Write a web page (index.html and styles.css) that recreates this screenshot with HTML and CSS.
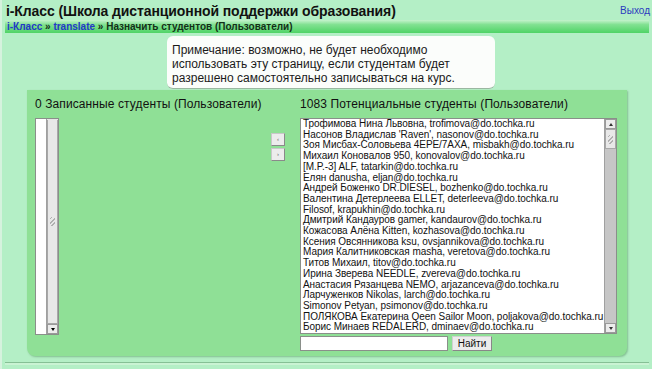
FILE: index.html
```html
<!DOCTYPE html>
<html lang="ru">
<head>
<meta charset="utf-8">
<title>i-Класс</title>
<link rel="stylesheet" href="styles.css">
</head>
<body>
<div class="header">
  <h1 class="title">i-Класс (Школа дистанционной поддержки образования)</h1>
  <a class="logout" href="#">Выход</a>
</div>
<div class="navbar">
  <a href="#">i-Класс</a> » <a href="#">translate</a> » Назначить студентов (Пользователи)
</div>
<div class="note">Примечание: возможно, не будет необходимо использовать эту страницу, если студентам будет разрешено самостоятельно записываться на курс.</div>
<div class="panel">
  <div class="col col-left">
    <div class="heading">0 Записанные студенты (Пользователи)</div>
    <div class="listbox listbox-small">
      <div class="list-body"></div>
      <div class="sbar sbar-empty">
        <div class="sbtn"></div>
        <div class="strack"><div class="thumb thumb-full"><span class="grip"></span></div></div>
        <div class="sbtn"><span class="arr-down dark"></span></div>
      </div>
    </div>
  </div>
  <div class="col col-mid">
    <button class="mv">‹</button>
    <button class="mv">›</button>
  </div>
  <div class="col col-right">
    <div class="heading">1083 Потенциальные студенты (Пользователи)</div>
    <div class="listbox listbox-big">
      <div class="list-body">
        <div class="opt">Трофимова Нина Львовна, trofimova@do.tochka.ru</div>
        <div class="opt">Насонов Владислав 'Raven', nasonov@do.tochka.ru</div>
        <div class="opt">Зоя Мисбах-Соловьева 4EPE/7AXA, misbakh@do.tochka.ru</div>
        <div class="opt">Михаил Коновалов 950, konovalov@do.tochka.ru</div>
        <div class="opt">[M.P.-3] ALF, tatarkin@do.tochka.ru</div>
        <div class="opt">Елян danusha, eljan@do.tochka.ru</div>
        <div class="opt">Андрей Боженко DR.DIESEL, bozhenko@do.tochka.ru</div>
        <div class="opt">Валентина Детерлеева ELLET, deterleeva@do.tochka.ru</div>
        <div class="opt">Filosof, krapukhin@do.tochka.ru</div>
        <div class="opt">Дмитрий Кандауров gamer, kandaurov@do.tochka.ru</div>
        <div class="opt">Кожасова Алёна Kitten, kozhasova@do.tochka.ru</div>
        <div class="opt">Ксения Овсянникова ksu, ovsjannikova@do.tochka.ru</div>
        <div class="opt">Мария Калитниковская masha, veretova@do.tochka.ru</div>
        <div class="opt">Титов Михаил, titov@do.tochka.ru</div>
        <div class="opt">Ирина Зверева NEEDLE, zvereva@do.tochka.ru</div>
        <div class="opt">Анастасия Рязанцева NEMO, arjazanceva@do.tochka.ru</div>
        <div class="opt">Ларчуженков Nikolas, larch@do.tochka.ru</div>
        <div class="opt">Simonov Petyan, psimonov@do.tochka.ru</div>
        <div class="opt">ПОЛЯКОВА Екатерина Qeen Sailor Moon, poljakova@do.tochka.ru</div>
        <div class="opt">Борис Минаев REDALERD, dminaev@do.tochka.ru</div>
      </div>
      <div class="sbar">
        <div class="sbtn"><span class="arr-up"></span></div>
        <div class="strack"><div class="thumb thumb-small"><span class="grip"></span></div></div>
        <div class="sbtn"><span class="arr-down"></span></div>
      </div>
    </div>
    <div class="search">
      <input class="search-input" type="text">
      <button class="search-btn">Найти</button>
    </div>
  </div>
</div>
<div class="footer-line"></div>
</body>
</html>
```

FILE: styles.css
```css
html, body {
  margin: 0;
  padding: 0;
}
body {
  background: #b4efc6;
  font-family: "Liberation Sans", Arial, sans-serif;
  color: #111;
  width: 652px;
  height: 369px;
  overflow: hidden;
  border-left: 2px solid #d6f2de;
  box-sizing: border-box;
}
.header {
  display: flex;
  justify-content: space-between;
  align-items: flex-start;
  height: 20px;
  padding: 0 2px 0 4px;
}
.title {
  margin: 0;
  padding-top: 3px;
  font-size: 14px;
  line-height: 17px;
  font-weight: bold;
  color: #111;
  letter-spacing: -0.1px;
}
.logout {
  font-size: 10px;
  line-height: 12px;
  padding-top: 5px;
  color: #2a3bbf;
  text-decoration: none;
}
.navbar {
  margin: 0 3px 0 3px;
  height: 13px;
  padding-left: 2px;
  font-size: 10px;
  line-height: 14px;
  font-weight: bold;
  color: #143018;
  background: linear-gradient(to bottom, #c5f3cd 0%, #82e192 35%, #4fd466 100%);
}
.navbar a {
  color: #2438c8;
  text-decoration: none;
}
.note {
  margin: 3px 0 0 165px;
  width: 318px;
  padding: 7px 5px 3px 5px;
  background: #fbfdfb;
  border-radius: 6px;
  border-bottom: 1px solid #9bb7a1;
  font-size: 12px;
  line-height: 14px;
  color: #1a1a1a;
}
.panel {
  display: flex;
  margin: 1px 0 0 25px;
  width: 600px;
  height: 266px;
  box-sizing: border-box;
  padding: 7px 10px 5px 8px;
  background: #8fe096;
  border-radius: 0 0 8px 8px;
  box-shadow: 1px 1px 2px rgba(40, 100, 50, 0.35);
}
.col {
  display: flex;
  flex-direction: column;
}
.col-left {
  width: 230px;
}
.col-mid {
  width: 35px;
  padding: 36px 0 0 6px;
  box-sizing: border-box;
  gap: 2px;
}
.col-right {
  width: 317px;
}
.heading {
  font-size: 12px;
  line-height: 14px;
  height: 14px;
  margin-bottom: 7px;
  white-space: nowrap;
  color: #111;
  letter-spacing: 0.1px;
}
.listbox {
  display: flex;
  background: #fff;
  border: 1px solid #8a8f8a;
  box-sizing: border-box;
  height: 217px;
}
.listbox-small {
  width: 24px;
}
.listbox-big {
  width: 317px;
}
.list-body {
  flex: 1;
  overflow: hidden;
  padding: 0 0 0 2px;
}
.opt {
  font-size: 10px;
  line-height: 10.7px;
  white-space: nowrap;
  color: #111;
  letter-spacing: -0.05px;
}
.sbar {
  width: 11px;
  display: flex;
  flex-direction: column;
  border-left: 1px solid #a0a0a0;
  background: #c6c6c6;
}
.sbar-empty {
  background: #e6e6e6;
}
.sbtn {
  height: 10px;
  background: #ececec;
  border: 1px solid #9a9a9a;
  box-sizing: border-box;
  display: flex;
  align-items: center;
  justify-content: center;
}
.sbar-empty .sbtn:first-child {
  height: 1px;
  border: none;
  background: #e6e6e6;
}
.strack {
  flex: 1;
  display: flex;
  flex-direction: column;
}
.thumb {
  background: #e8e8e8;
  border: 1px solid #a8a8a8;
  box-sizing: border-box;
  display: flex;
  align-items: center;
  justify-content: center;
}
.thumb-full {
  flex: 1;
  border-top: none;
}
.thumb-small {
  height: 20px;
}
.grip {
  width: 5px;
  height: 9px;
  background: repeating-linear-gradient(135deg, transparent 0 1px, #b0b0b0 1px 2px, transparent 2px 3px);
}
.arr-up, .arr-down {
  width: 0;
  height: 0;
  border-left: 2.5px solid transparent;
  border-right: 2.5px solid transparent;
}
.arr-up {
  border-bottom: 3px solid #333;
}
.arr-down {
  border-top: 3px solid #333;
}
.arr-down.dark {
  border-top-color: #000;
}
.mv {
  width: 14px;
  height: 13px;
  padding: 0;
  margin: 0;
  font-size: 6px;
  line-height: 11px;
  color: #666;
  background: #ececec;
  border: 1px solid #c8c8c8;
  border-right-color: #8a8a8a;
  border-bottom-color: #8a8a8a;
  font-family: "Liberation Sans", Arial, sans-serif;
}
.search {
  display: flex;
  gap: 4px;
  margin-top: 2px;
}
.search-input {
  width: 148px;
  height: 15px;
  box-sizing: border-box;
  margin: 0;
  padding: 0;
  border: 1px solid #8a8f8a;
  background: #fff;
}
.search-btn {
  width: 40px;
  height: 15px;
  margin: 0;
  padding: 0;
  box-sizing: border-box;
  font-family: "Liberation Sans", Arial, sans-serif;
  font-size: 10px;
  line-height: 12px;
  color: #111;
  background: #ececec;
  border: 1px solid #d0d0d0;
  border-right-color: #888;
  border-bottom-color: #888;
}
.footer-line {
  margin: 6px 3px 0 3px;
  height: 1px;
  background: #86c095;
  border-bottom: 2px solid #c9f3d3;
}
```
